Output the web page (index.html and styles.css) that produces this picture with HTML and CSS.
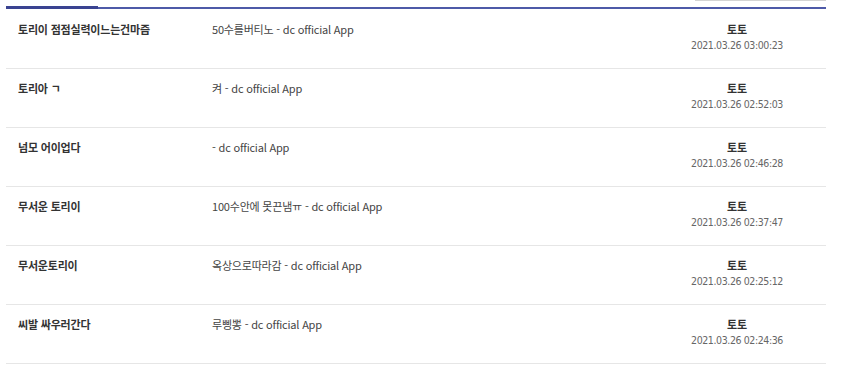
FILE: index.html
```html
<!DOCTYPE html>
<html lang="ko">
<head>
<meta charset="utf-8">
<link rel="stylesheet" href="styles.css">
</head>
<body>
<div class="wrap">
  <div class="toolbar"><div class="search-edge"></div></div>
  <div class="tabs"><div class="tab-active"></div></div>
  <ul class="list">
    <li class="row">
      <div class="title">토리이 점점실력이느는건마즘</div>
      <div class="sub">50수를버티노 - dc official App</div>
      <div class="meta"><div class="nick">토토</div><div class="date">2021.03.26 03:00:23</div></div>
    </li>
    <li class="row">
      <div class="title">토리아 ㄱ</div>
      <div class="sub">켜 - dc official App</div>
      <div class="meta"><div class="nick">토토</div><div class="date">2021.03.26 02:52:03</div></div>
    </li>
    <li class="row">
      <div class="title">넘모 어이업다</div>
      <div class="sub">- dc official App</div>
      <div class="meta"><div class="nick">토토</div><div class="date">2021.03.26 02:46:28</div></div>
    </li>
    <li class="row">
      <div class="title">무서운 토리이</div>
      <div class="sub">100수안에 못끈냄ㅠ - dc official App</div>
      <div class="meta"><div class="nick">토토</div><div class="date">2021.03.26 02:37:47</div></div>
    </li>
    <li class="row">
      <div class="title">무서운토리이</div>
      <div class="sub">옥상으로따라감 - dc official App</div>
      <div class="meta"><div class="nick">토토</div><div class="date">2021.03.26 02:25:12</div></div>
    </li>
    <li class="row">
      <div class="title">씨발 싸우러간다</div>
      <div class="sub">루삥뽕 - dc official App</div>
      <div class="meta"><div class="nick">토토</div><div class="date">2021.03.26 02:24:36</div></div>
    </li>
  </ul>
</div>
</body>
</html>
```
FILE: styles.css
```css
html, body {
  margin: 0;
  padding: 0;
  background: #fff;
}
body {
  font-family: "Noto Sans CJK KR", "Liberation Sans", sans-serif;
  color: #333;
}
.wrap {
  width: 820px;
  margin-left: 6px;
}
.toolbar {
  display: flex;
  justify-content: flex-end;
  height: 6px;
}
.search-edge {
  width: 131px;
  height: 1px;
  background: #d4d4d4;
}
.tabs {
  height: 3px;
  display: flex;
  align-items: flex-end;
  background: linear-gradient(#fff 0 1px, #4e5aa8 1px);
}
.tab-active {
  width: 92px;
  height: 3px;
  background: #3a4391;
}
.list {
  list-style: none;
  margin: 0;
  padding: 0;
}
.row {
  display: grid;
  grid-template-columns: 194px 1fr 150px;
  padding: 11px 14px 15px 12px;
  height: 32px;
  border-bottom: 1px solid #e6e6e6;
  font-size: 11px;
  line-height: 16px;
}
.row:first-child {
  padding-top: 12px;
}
.title {
  font-weight: bold;
  color: #333;
  letter-spacing: -0.2px;
}
.sub {
  color: #444;
  letter-spacing: -0.2px;
}
.meta {
  text-align: center;
}
.nick {
  font-weight: bold;
  color: #333;
}
.date {
  font-family: "DejaVu Sans Condensed", "DejaVu Sans", sans-serif;
  font-size: 10.5px;
  color: #666;
  letter-spacing: -0.4px;
}
```
